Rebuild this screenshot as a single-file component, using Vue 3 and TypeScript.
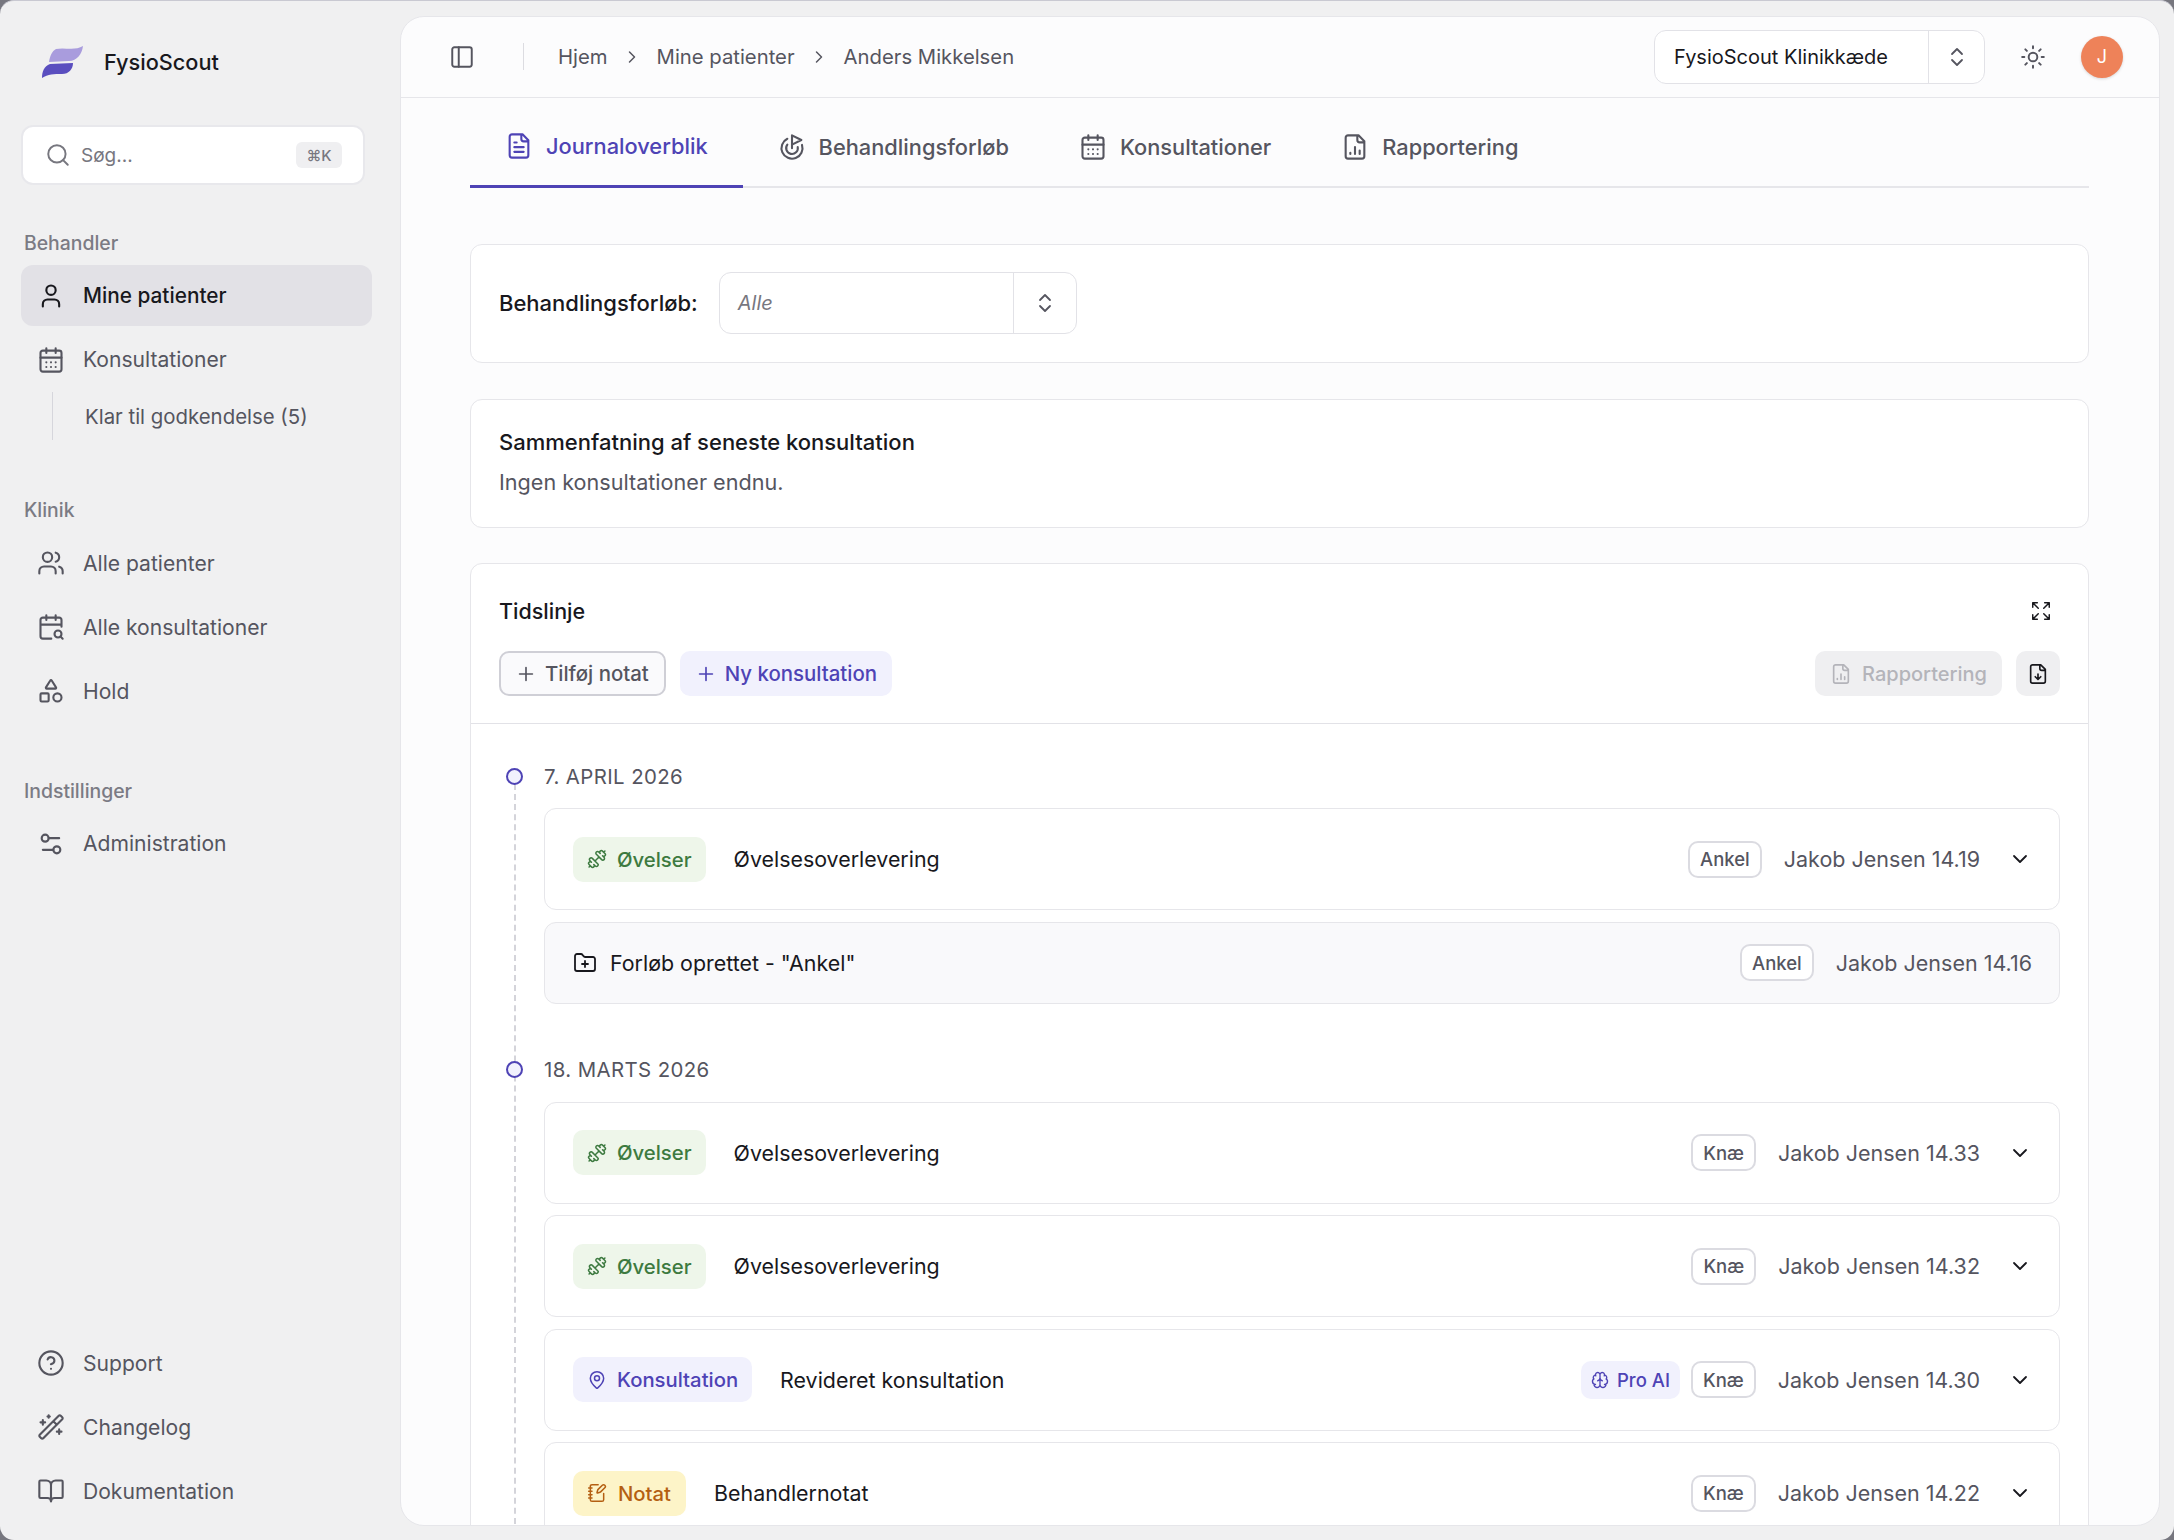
<script setup lang="ts">
import { h } from 'vue'

const icons: Record<string, string> = {
  search: '<circle cx="11" cy="11" r="8"/><path d="m21 21-4.3-4.3"/>',
  user: '<path d="M19 21v-2a4 4 0 0 0-4-4H9a4 4 0 0 0-4 4v2"/><circle cx="12" cy="7" r="4"/>',
  calendar: '<path d="M8 2v4M16 2v4"/><rect x="3" y="4" width="18" height="18" rx="2"/><path d="M3 10h18M8 14h.01M12 14h.01M16 14h.01M8 18h.01M12 18h.01M16 18h.01"/>',
  users: '<path d="M16 21v-2a4 4 0 0 0-4-4H6a4 4 0 0 0-4 4v2"/><circle cx="9" cy="7" r="4"/><path d="M22 21v-2a4 4 0 0 0-3-3.87M16 3.13a4 4 0 0 1 0 7.75"/>',
  calendarSearch: '<path d="M16 2v4M21 11.75V6a2 2 0 0 0-2-2H5a2 2 0 0 0-2 2v14a2 2 0 0 0 2 2h7.25M22 22l-1.875-1.875M3 10h18M8 2v4"/><circle cx="18" cy="18" r="3"/>',
  shapes: '<path d="M8.3 10a.7.7 0 0 1-.626-1.079L11.4 3a.7.7 0 0 1 1.198-.043L16.3 8.9a.7.7 0 0 1-.572 1.1Z"/><rect x="3" y="14" width="7" height="7" rx="1"/><circle cx="17.5" cy="17.5" r="3.5"/>',
  settings: '<path d="M14 17H5M19 7h-9"/><circle cx="17" cy="17" r="3"/><circle cx="7" cy="7" r="3"/>',
  help: '<circle cx="12" cy="12" r="10"/><path d="M9.09 9a3 3 0 0 1 5.83 1c0 2-3 3-3 3M12 17h.01"/>',
  wand: '<path d="m21.64 3.64-1.28-1.28a1.21 1.21 0 0 0-1.72 0L2.36 18.64a1.21 1.21 0 0 0 0 1.72l1.28 1.28a1.2 1.2 0 0 0 1.72 0L21.64 5.36a1.2 1.2 0 0 0 0-1.72M14 7l3 3M5 6v4M19 14v4M10 2v2M7 8H3M21 16h-4M11 3H9"/>',
  book: '<path d="M12 7v14M3 18a1 1 0 0 1-1-1V4a1 1 0 0 1 1-1h5a4 4 0 0 1 4 4 4 4 0 0 1 4-4h5a1 1 0 0 1 1 1v13a1 1 0 0 1-1 1h-6a3 3 0 0 0-3 3 3 3 0 0 0-3-3z"/>',
  panel: '<rect x="3" y="3" width="18" height="18" rx="2"/><path d="M9 3v18"/>',
  chevronRight: '<path d="m9 18 6-6-6-6"/>',
  chevronDown: '<path d="m6 9 6 6 6-6"/>',
  upDown: '<path d="m7 9 5-5 5 5M7 15l5 5 5-5"/>',
  sun: '<circle cx="12" cy="12" r="4"/><path d="M12 2v2M12 20v2M4.93 4.93l1.41 1.41M17.66 17.66l1.41 1.41M2 12h2M20 12h2M6.34 17.66l-1.41 1.41M19.07 4.93l-1.41 1.41"/>',
  fileText: '<path d="M15 2H6a2 2 0 0 0-2 2v16a2 2 0 0 0 2 2h12a2 2 0 0 0 2-2V7ZM14 2v4a2 2 0 0 0 2 2h4M10 9H8M16 13H8M16 17H8"/>',
  goal: '<path d="M12 13V2l8 4-8 4M20.561 10.222a9 9 0 1 1-12.55-5.29M8.002 9.997a5 5 0 1 0 8.9 2.02"/>',
  fileChart: '<path d="M15 2H6a2 2 0 0 0-2 2v16a2 2 0 0 0 2 2h12a2 2 0 0 0 2-2V7ZM14 2v4a2 2 0 0 0 2 2h4M8 18v-1M12 18v-6M16 18v-3"/>',
  fileDown: '<path d="M15 2H6a2 2 0 0 0-2 2v16a2 2 0 0 0 2 2h12a2 2 0 0 0 2-2V7ZM14 2v4a2 2 0 0 0 2 2h4M12 18v-6M9 15l3 3 3-3"/>',
  plus: '<path d="M5 12h14M12 5v14"/>',
  expand: '<path d="m15 15 6 6M15 9l6-6M21 16v5h-5M21 8V3h-5M3 16v5h5M3 21l6-6M3 8V3h5M3 3l6 6"/>',
  dumbbell: '<path d="M17.596 12.768a2 2 0 1 0 2.829-2.829l-1.768-1.767a2 2 0 0 0 2.828-2.829l-2.828-2.828a2 2 0 0 0-2.829 2.828l-1.767-1.768a2 2 0 1 0-2.829 2.829zM2.5 21.5l1.4-1.4M20.1 3.9l1.4-1.4M5.343 21.485a2 2 0 1 0 2.829-2.828l1.767 1.768a2 2 0 1 0 2.829-2.829l-6.364-6.364a2 2 0 1 0-2.829 2.829l1.768 1.767a2 2 0 0 0-2.828 2.829zM9.6 14.4l4.8-4.8"/>',
  pin: '<path d="M20 10c0 4.993-5.539 10.193-7.399 11.799a1 1 0 0 1-1.202 0C9.539 20.193 4 14.993 4 10a8 8 0 0 1 16 0"/><circle cx="12" cy="10" r="3"/>',
  notebook: '<path d="M13.4 2H6a2 2 0 0 0-2 2v16a2 2 0 0 0 2 2h12a2 2 0 0 0 2-2v-7.4M2 6h4M2 10h4M2 14h4M2 18h4M21.378 5.626a1 1 0 1 0-3.004-3.004l-5.01 5.012a2 2 0 0 0-.506.854l-.837 2.87a.5.5 0 0 0 .62.62l2.87-.837a2 2 0 0 0 .854-.506z"/>',
  brain: '<path d="M12 18V5M15 13a4.17 4.17 0 0 1-3-4 4.17 4.17 0 0 1-3 4M17.598 6.5A3 3 0 1 0 12 5a3 3 0 1 0-5.598 1.5M17.997 5.125a4 4 0 0 1 2.526 5.77M18 18a4 4 0 0 0 2-7.464M19.967 17.483A4 4 0 1 1 12 18a4 4 0 1 1-7.967-.517M6 18a4 4 0 0 1-2-7.464M6.003 5.125a4 4 0 0 0-2.526 5.77"/>',
  folderPlus: '<path d="M12 10v6M9 13h6M20 20a2 2 0 0 0 2-2V8a2 2 0 0 0-2-2h-7.9a2 2 0 0 1-1.69-.9L9.6 3.9A2 2 0 0 0 7.93 3H4a2 2 0 0 0-2 2v13a2 2 0 0 0 2 2Z"/>',
}

// lille ikon-komponent, alle ikoner har samme viewBox
const Ic = (props: { name: string }) =>
  h('svg', {
    viewBox: '0 0 24 24',
    fill: 'none',
    stroke: 'currentColor',
    'stroke-width': 1.8,
    'stroke-linecap': 'round',
    'stroke-linejoin': 'round',
    innerHTML: icons[props.name],
  })
Ic.props = ['name']

const sections = [
  {
    title: 'Behandler',
    items: [
      { label: 'Mine patienter', icon: 'user', active: true },
      { label: 'Konsultationer', icon: 'calendar', sub: 'Klar til godkendelse (5)' },
    ],
  },
  {
    title: 'Klinik',
    items: [
      { label: 'Alle patienter', icon: 'users' },
      { label: 'Alle konsultationer', icon: 'calendarSearch' },
      { label: 'Hold', icon: 'shapes' },
    ],
  },
  {
    title: 'Indstillinger',
    items: [{ label: 'Administration', icon: 'settings' }],
  },
]

const footerItems = [
  { label: 'Support', icon: 'help' },
  { label: 'Changelog', icon: 'wand' },
  { label: 'Dokumentation', icon: 'book' },
]

const tabs = [
  { label: 'Journaloverblik', icon: 'fileText', active: true },
  { label: 'Behandlingsforløb', icon: 'goal' },
  { label: 'Konsultationer', icon: 'calendar' },
  { label: 'Rapportering', icon: 'fileChart' },
]

type Row = {
  kind?: 'ovelser' | 'konsultation' | 'notat'
  title: string
  region: string
  by: string
  ai?: boolean
}

const kinds = {
  ovelser: { label: 'Øvelser', icon: 'dumbbell' },
  konsultation: { label: 'Konsultation', icon: 'pin' },
  notat: { label: 'Notat', icon: 'notebook' },
}

const groups: { date: string; rows: Row[] }[] = [
  {
    date: '7. APRIL 2026',
    rows: [
      { kind: 'ovelser', title: 'Øvelsesoverlevering', region: 'Ankel', by: 'Jakob Jensen 14.19' },
      { title: 'Forløb oprettet - "Ankel"', region: 'Ankel', by: 'Jakob Jensen 14.16' },
    ],
  },
  {
    date: '18. MARTS 2026',
    rows: [
      { kind: 'ovelser', title: 'Øvelsesoverlevering', region: 'Knæ', by: 'Jakob Jensen 14.33' },
      { kind: 'ovelser', title: 'Øvelsesoverlevering', region: 'Knæ', by: 'Jakob Jensen 14.32' },
      { kind: 'konsultation', title: 'Revideret konsultation', region: 'Knæ', by: 'Jakob Jensen 14.30', ai: true },
      { kind: 'notat', title: 'Behandlernotat', region: 'Knæ', by: 'Jakob Jensen 14.22' },
    ],
  },
]
</script>

<template>
  <div class="window">
    <aside class="sidebar">
      <div class="brand">
        <svg class="logo" viewBox="0 0 41 32">
          <path fill="#a99cdd" d="M14 3C22 1 33 5 41 0 40 8 35 15 27 15L7 16C8 10 10 5 14 3Z" />
          <path fill="#5a4ebf" d="M8 18 31 17C31 23 27 28 20 28 12 28 6 28 0 32 0 26 2 20 8 18Z" />
        </svg>
        <span>FysioScout</span>
      </div>

      <div class="search">
        <Ic name="search" class="search-icon" />
        <span class="search-text">Søg...</span>
        <kbd>⌘K</kbd>
      </div>

      <section v-for="s in sections" :key="s.title" class="nav-section">
        <h4>{{ s.title }}</h4>
        <div class="nav-list">
          <template v-for="item in s.items" :key="item.label">
            <a class="nav-item" :class="{ active: item.active }">
              <Ic :name="item.icon" />
              <span>{{ item.label }}</span>
            </a>
            <div v-if="item.sub" class="nav-sub">{{ item.sub }}</div>
          </template>
        </div>
      </section>

      <div class="nav-list nav-footer">
        <a v-for="item in footerItems" :key="item.label" class="nav-item">
          <Ic :name="item.icon" />
          <span>{{ item.label }}</span>
        </a>
      </div>
    </aside>

    <main class="panel">
      <header class="topbar">
        <Ic name="panel" class="toggle" />
        <div class="sep"></div>
        <nav class="crumbs">
          <span>Hjem</span>
          <Ic name="chevronRight" />
          <span>Mine patienter</span>
          <Ic name="chevronRight" />
          <span>Anders Mikkelsen</span>
        </nav>
        <div class="clinic-select">
          <span class="clinic-name">FysioScout Klinikkæde</span>
          <span class="select-btn"><Ic name="upDown" /></span>
        </div>
        <Ic name="sun" class="sun" />
        <div class="avatar">J</div>
      </header>

      <div class="content">
        <div class="tabs">
          <a v-for="t in tabs" :key="t.label" class="tab" :class="{ active: t.active }">
            <Ic :name="t.icon" />
            {{ t.label }}
          </a>
        </div>

        <div class="card filter-card">
          <label>Behandlingsforløb:</label>
          <div class="course-select">
            <span class="placeholder">Alle</span>
            <span class="select-btn"><Ic name="upDown" /></span>
          </div>
        </div>

        <div class="card summary-card">
          <h3>Sammenfatning af seneste konsultation</h3>
          <p>Ingen konsultationer endnu.</p>
        </div>

        <div class="card timeline-card">
          <div class="timeline-head">
            <div class="head-title">
              <h3>Tidslinje</h3>
              <Ic name="expand" class="expand" />
            </div>
            <div class="head-actions">
              <button class="btn outline"><Ic name="plus" />Tilføj notat</button>
              <button class="btn soft"><Ic name="plus" />Ny konsultation</button>
              <button class="btn disabled"><Ic name="fileChart" />Rapportering</button>
              <button class="btn square"><Ic name="fileDown" /></button>
            </div>
          </div>

          <div class="timeline">
            <div class="rail"></div>
            <div v-for="g in groups" :key="g.date" class="group">
              <div class="date"><i class="dot"></i>{{ g.date }}</div>
              <div class="rows">
                <div v-for="(r, i) in g.rows" :key="i" class="row" :class="{ plain: !r.kind }">
                  <span v-if="r.kind" class="kind" :class="r.kind">
                    <Ic :name="kinds[r.kind].icon" />{{ kinds[r.kind].label }}
                  </span>
                  <Ic v-else name="folderPlus" class="folder" />
                  <span class="row-title">{{ r.title }}</span>
                  <span v-if="r.ai" class="ai"><Ic name="brain" />Pro AI</span>
                  <span class="region">{{ r.region }}</span>
                  <span class="by">{{ r.by }}</span>
                  <Ic v-if="r.kind" name="chevronDown" class="chev" />
                </div>
              </div>
            </div>
          </div>
        </div>
      </div>
    </main>
  </div>
</template>

<style>
html,
body {
  margin: 0;
  background: #77777f;
}
</style>

<style scoped>
.window {
  box-sizing: border-box;
  width: 2174px;
  height: 1540px;
  display: flex;
  padding: 15px 14px 14px 0;
  background: #f0f0f1;
  border-top: 1px solid #c9c9d2;
  border-radius: 14px;
  overflow: hidden;
  font-family: Inter, "Noto Sans", sans-serif;
  color: #55555f;
}

.sidebar {
  width: 400px;
  flex: none;
  display: flex;
  flex-direction: column;
  margin: -15px 0 -14px;
  padding: 45px 0 18.5px 21px;
  box-sizing: border-box;
}

.brand {
  display: flex;
  align-items: center;
  gap: 21px;
  height: 32px;
  margin-left: 21px;
  font-size: 21.7px;
  font-weight: 500;
  color: #18181d;
}

.logo {
  width: 41px;
  height: 32px;
}

.search {
  width: 344px;
  height: 60px;
  box-sizing: border-box;
  margin: 47px 0 0 0;
  padding: 0 21px 0 22px;
  display: flex;
  align-items: center;
  background: #fff;
  border: 2px solid #e8e8ec;
  border-radius: 12px;
  font-size: 19px;
  color: #77777f;
}

.search-icon {
  width: 26px;
  height: 26px;
  margin-right: 10px;
}

.search-text {
  flex: 1;
}

kbd {
  width: 46px;
  height: 26px;
  display: flex;
  align-items: center;
  justify-content: center;
  background: #efeff1;
  border-radius: 6px;
  font: 500 15px Inter, sans-serif;
  color: #77777f;
}

.nav-section {
  margin-top: 45.5px;
}

.nav-section + .nav-section {
  margin-top: 57px;
}

h4 {
  margin: 0 0 10.5px 3px;
  font-size: 19.4px;
  line-height: 24px;
  font-weight: 500;
  color: #7b7b84;
}

.nav-list {
  display: flex;
  flex-direction: column;
  gap: 3px;
}

.nav-footer {
  margin-top: auto;
}

.nav-item {
  width: 351px;
  height: 61px;
  box-sizing: border-box;
  padding-left: 16px;
  display: flex;
  align-items: center;
  gap: 18px;
  border-radius: 12px;
  font-size: 21.1px;
  color: #55555f;
}

.nav-item svg {
  width: 28px;
  height: 28px;
  flex: none;
}

.nav-item.active {
  background: #e2e1e6;
  color: #18181d;
  font-size: 20.8px;
  font-weight: 500;
}

.nav-sub {
  height: 48px;
  margin: -1px 0 1px 31px;
  padding-left: 32px;
  display: flex;
  align-items: center;
  border-left: 1px solid #d6d6dc;
  font-size: 20.4px;
  color: #55555f;
}

.panel {
  flex: 1;
  min-width: 0;
  background: #fcfcfd;
  border: 1px solid #e6e6ea;
  border-radius: 24px;
  overflow: hidden;
}

.topbar {
  height: 81px;
  box-sizing: border-box;
  padding: 0 36px 1px 48px;
  display: flex;
  align-items: center;
  border-bottom: 1px solid #e6e6ea;
  font-size: 20.3px;
}

.toggle {
  width: 26px;
  height: 26px;
}

.sep {
  width: 1px;
  height: 27px;
  margin: 0 34px 0 48px;
  background: #dcdce1;
}

.crumbs {
  flex: 1;
  display: flex;
  align-items: center;
}

.crumbs svg {
  width: 20px;
  height: 20px;
  margin: 0 14.5px;
}

.clinic-select,
.course-select {
  display: flex;
  align-items: center;
  box-sizing: border-box;
  background: #fff;
  border: 1px solid #e2e2e7;
  border-radius: 12px;
}

.clinic-select {
  width: 331px;
  height: 54px;
  font-size: 20px;
  color: #18181d;
}

.clinic-name {
  flex: 1;
  padding-left: 19px;
}

.select-btn {
  width: 55px;
  height: 100%;
  flex: none;
  display: flex;
  align-items: center;
  justify-content: center;
  border-left: 1px solid #e2e2e7;
  color: #55555f;
}

.course-select .select-btn {
  width: 62px;
}

.select-btn svg {
  width: 24px;
  height: 24px;
}

.sun {
  width: 26px;
  height: 26px;
  margin: 0 35px;
}

.avatar {
  width: 42px;
  height: 42px;
  border-radius: 50%;
  display: flex;
  align-items: center;
  justify-content: center;
  background: #ee8259;
  box-shadow: 0 1px 3px rgba(0, 0, 0, 0.15);
  color: #fff;
  font-size: 18px;
}

.content {
  padding: 0 70px 0 69px;
}

.tabs {
  height: 90px;
  display: flex;
  border-bottom: 2px solid #e6e6ea;
  box-sizing: border-box;
}

.tab {
  height: 90px;
  box-sizing: border-box;
  padding: 8px 35px 0;
  display: flex;
  align-items: center;
  gap: 13px;
  font-size: 21.8px;
  font-weight: 500;
  color: #55555f;
}

.tab svg {
  width: 28px;
  height: 28px;
}

.tab.active {
  color: #4e43b5;
  border-bottom: 3px solid #4e43b5;
}

.card {
  background: #fff;
  border: 1px solid #e6e6ea;
  border-radius: 12px;
}

.filter-card {
  height: 119px;
  box-sizing: border-box;
  margin-top: 56px;
  padding: 0 28px 1px;
  display: flex;
  align-items: center;
  gap: 21px;
}

.filter-card label {
  font-size: 22px;
  font-weight: 500;
  color: #18181d;
}

.course-select {
  width: 358px;
  height: 62px;
}

.placeholder {
  flex: 1;
  padding-left: 18px;
  font-size: 20px;
  font-style: italic;
  color: #77777f;
}

.summary-card {
  height: 129px;
  box-sizing: border-box;
  margin-top: 36px;
  padding: 27px 28px 0;
}

h3 {
  margin: 0;
  font-size: 22px;
  line-height: 30px;
  font-weight: 500;
  color: #18181d;
}

.head-title h3 {
  font-size: 21.5px;
}

.summary-card p {
  margin: 10px 0 0;
  font-size: 21.6px;
  line-height: 30px;
}

.timeline-card {
  margin-top: 35px;
}

.timeline-head {
  height: 160px;
  box-sizing: border-box;
  padding: 32px 28px 0;
  border-bottom: 1px solid #e2e2e7;
}

.head-title {
  display: flex;
  align-items: center;
  justify-content: space-between;
}

.expand {
  width: 22px;
  height: 22px;
  color: #18181d;
  margin-right: 8px;
  stroke-width: 1.6;
}

.head-actions {
  margin-top: 25px;
  display: flex;
  gap: 14px;
}

.btn {
  height: 45px;
  box-sizing: border-box;
  padding: 0 15px;
  display: flex;
  align-items: center;
  gap: 8px;
  border: none;
  border-radius: 10px;
  font: 500 20.4px Inter, sans-serif;
}

.btn svg {
  width: 22px;
  height: 22px;
}

.btn.outline {
  padding-left: 14px;
  background: #fafafc;
  border: 2px solid #cfcfd6;
  color: #55555f;
}

.btn.soft {
  background: #f1f1fd;
  color: #4e43b5;
}

.btn.disabled {
  margin-left: auto;
  gap: 10px;
  font-size: 20px;
  background: #efeff1;
  color: #b4b4ba;
}

.btn.square {
  width: 44px;
  padding: 0;
  justify-content: center;
  background: #efeff1;
  color: #18181d;
}

.timeline {
  position: relative;
  padding: 38px 28px 0;
}

.rail {
  position: absolute;
  left: 43px;
  top: 60px;
  bottom: 0;
  border-left: 2px dashed #d4d4da;
}

.group + .group {
  margin-top: 52px;
}

.date {
  position: relative;
  height: 28px;
  display: flex;
  align-items: center;
  gap: 21px;
  padding-left: 7px;
  font-size: 20.4px;
  letter-spacing: 0.4px;
}

.dot {
  width: 17px;
  height: 17px;
  box-sizing: border-box;
  border: 2px solid #4e43b5;
  border-radius: 50%;
  background: #f1f1fd;
}

.rows {
  margin: 18px 0 0 45px;
  display: flex;
  flex-direction: column;
  gap: 11.5px;
}

.row {
  height: 102px;
  box-sizing: border-box;
  padding: 0 27px 0 28px;
  display: flex;
  align-items: center;
  border: 1px solid #e6e6ea;
  border-radius: 12px;
  background: #fff;
  font-size: 21.4px;
}

.row.plain {
  height: 82px;
  background: #f9f9fb;
}

.kind {
  height: 45px;
  padding: 0 14px;
  display: flex;
  align-items: center;
  gap: 10px;
  border-radius: 10px;
  font-size: 20.3px;
  font-weight: 500;
}

.kind svg {
  width: 20px;
  height: 20px;
}

.kind.ovelser {
  background: #eef6ea;
  color: #3d7a40;
}

.kind.konsultation {
  background: #f1f1fd;
  color: #4e43b5;
}

.kind.notat {
  gap: 11px;
  padding-right: 15px;
  background: #fdf4c8;
  color: #b45f12;
}

.folder {
  width: 24px;
  height: 24px;
  color: #18181d;
  margin-right: 13px;
}

.row-title {
  flex: 1;
  margin-left: 28px;
  color: #18181d;
}

.folder + .row-title {
  margin-left: 0;
}

.ai {
  height: 38px;
  padding: 0 10px;
  margin-right: 11px;
  display: flex;
  align-items: center;
  gap: 8px;
  background: #f1f1fd;
  border-radius: 10px;
  color: #4e43b5;
  font-size: 18.5px;
  font-weight: 500;
}

.ai svg {
  width: 18px;
  height: 18px;
}

.region {
  height: 37px;
  box-sizing: border-box;
  padding: 0 10px;
  display: flex;
  align-items: center;
  background: #fff;
  border: 2px solid #dbdbe1;
  border-radius: 10px;
  font-size: 18.5px;
  font-weight: 500;
}

.by {
  margin-left: 22px;
  font-size: 21.5px;
}

.chev {
  width: 24px;
  height: 24px;
  margin-left: 28px;
  color: #18181d;
}
</style>
